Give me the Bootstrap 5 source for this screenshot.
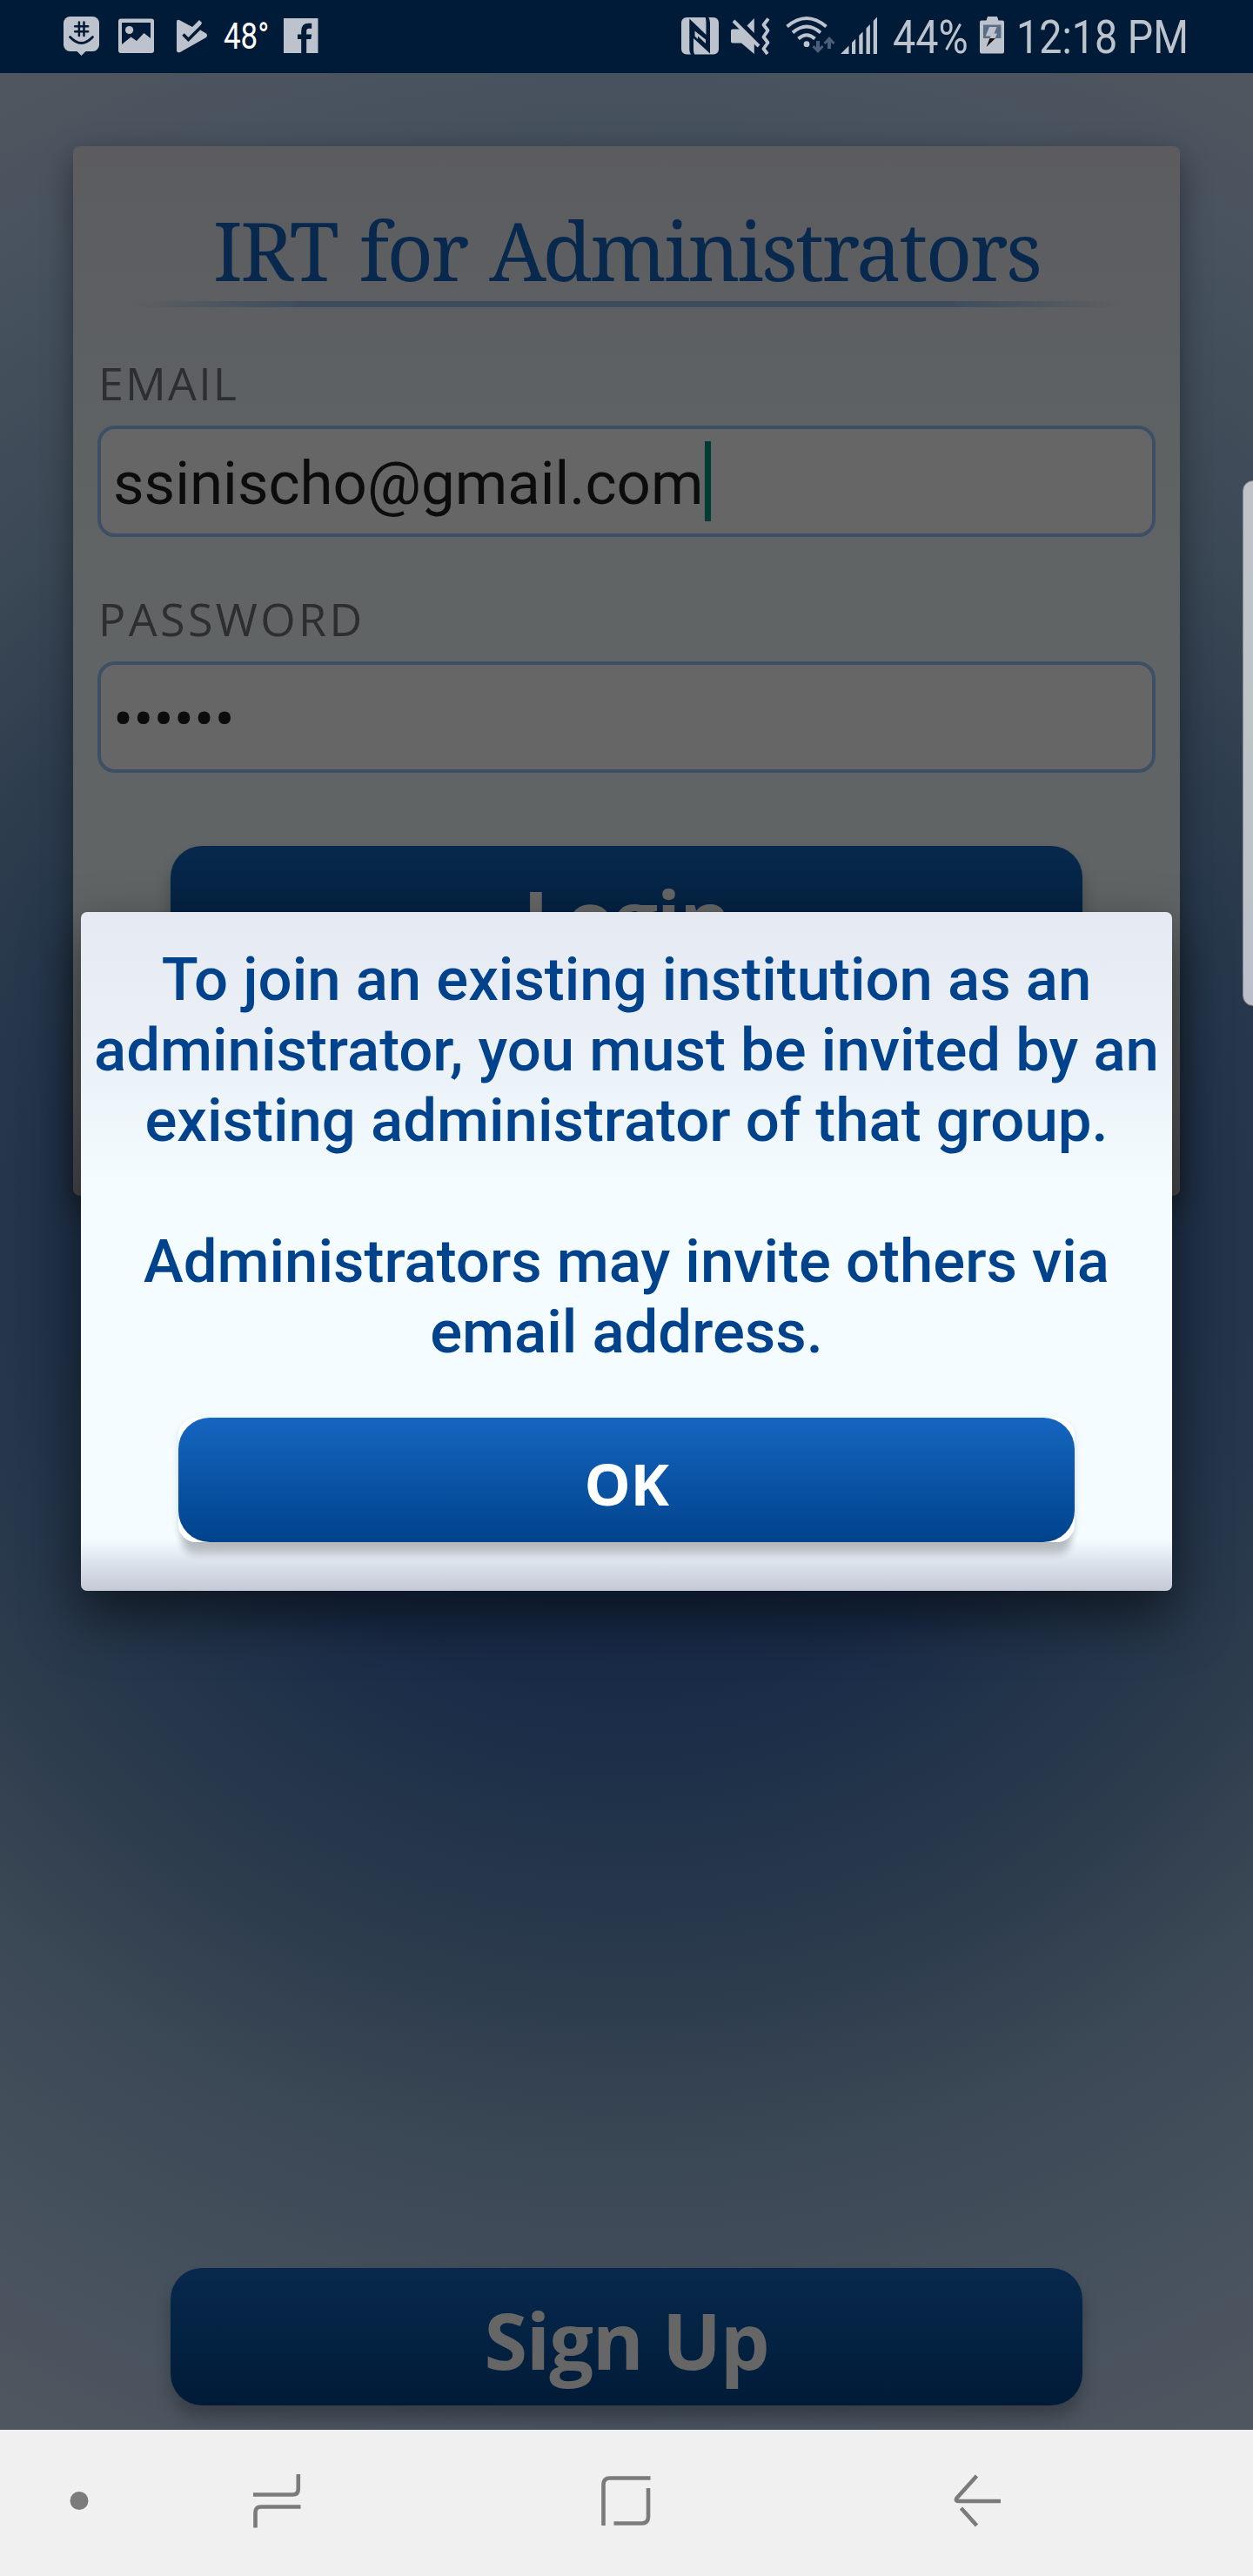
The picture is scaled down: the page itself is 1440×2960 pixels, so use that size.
<!DOCTYPE html>
<html lang="en">
<head>
<meta charset="utf-8">
<title>IRT for Administrators</title>
<meta name="viewport" content="width=device-width, initial-scale=1">
<link href="https://cdn.jsdelivr.net/npm/bootstrap@5.3.0/dist/css/bootstrap.min.css" rel="stylesheet">
<style>
  body { width: 1440px; height: 2960px; overflow: hidden; font-family: Roboto, sans-serif; }

  /* system status bar */
  .status-bar { height: 84px; background: #001b37; color: #bdc3cc; padding-left: 73px; }
  .status-bar svg { display: block; height: 54px; flex: none; }
  .status-text { display: block; flex: none; height: 84px; line-height: 84px; font-size: 53px; white-space: nowrap; }
  .status-text > span { display: inline-block; transform-origin: 0 50%; transform: scaleX(.88); }
  .temp-text { font-size: 42px; color: #fff; }
  .temp-text > span { transform: scaleX(.83); }

  /* dimmed login screen */
  .screen {
    height: 2708px; padding: 84px 84px 28px;
    background: radial-gradient(circle 1530px at 720px 1356px,
      #0e2442 0, #192b47 33%, #22344a 44%, #2d3c4d 56%, #3b4855 69%, #47525e 87%, #50565f 100%);
  }
  .login-card {
    height: 1206px; padding: 69px 28px 0; border: 0; border-radius: 8px;
    background: linear-gradient(#5c5c5f 0, #5d6062 18%, #606464 40%, #606464 80%, #5a5d5d 90%, #4a4a4e 100%);
    box-shadow: 0 12px 34px rgba(0,0,0,.4);
  }
  .app-title { font-family: "Noto Serif", serif; font-weight: 400; font-size: 93px; line-height: 100px; letter-spacing: -2.6px; word-spacing: 4px; color: #08284d; white-space: nowrap; }
  .title-rule { height: 7px; margin: 9px 30px 0; background: linear-gradient(90deg, rgba(61,76,93,0) 1%, #3d4c5d 18%, #3d4c5d 82%, rgba(61,76,93,0) 99%); }
  .field-label { display: block; font-family: "Open Sans", sans-serif; font-size: 52px; line-height: 60px; letter-spacing: 3.4px; color: #2d2e2f; padding-left: 1px; margin-bottom: 19px; }
  .label-tight { letter-spacing: 2.2px; }
  .field-box { height: 128px; border: 4px solid #3d4f66; border-radius: 20px; background: #666; color: #0c0c0c; font-size: 69px; line-height: 120px; padding: 0 14px; }
  .field-box > span { padding-top: 6px; }
  .caret { width: 7px; height: 92px; background: #003c34; margin-left: 2px; }
  .btn-app {
    display: block; width: 1048px; height: 158px; padding: 3px 0 0; border: 0; border-radius: 36px;
    font-family: "Open Sans", sans-serif; font-weight: 700; font-size: 90px; line-height: 158px;
  }
  .btn-dim { color: #666; letter-spacing: -1.2px; background: linear-gradient(#08294d, #001b37); box-shadow: 0 14px 18px rgba(0,0,0,.25); }

  /* notice dialog */
  .notice {
    left: 93px; top: 1048px; width: 1254px; height: 780px; padding: 37px 0 0; border-radius: 7px;
    background: linear-gradient(#e5e9f2 0, #e9edf4 12%, #ecf3f8 24%, #f4fcff 41%, #f4fcff 92.5%, #dbe1ea 96%, #c4c9d6 100%);
    box-shadow: 0 28px 60px 4px rgba(0,0,0,.5);
    z-index: 5;
  }
  .notice-text { font-size: 68.9px; font-weight: 500; line-height: 81px; color: #00438c; margin: 0 0 58px; }
  .ok-wrap { width: 1030px; height: 143px; border-radius: 20px; background: #fff; box-shadow: 0 18px 9px -4px rgba(0,0,0,.2), 0 3px 8px rgba(0,0,0,.1); }
  .btn-ok { width: 100%; height: 143px; line-height: 141px; padding-top: 5px; font-size: 67px; letter-spacing: -.5px; color: #fff; background: linear-gradient(#1565c0, #00438c); }

  .edge-handle { left: 1428px; top: 552px; width: 24px; height: 604px; border-radius: 12px 0 0 12px; border: 1px solid #85888f; background: linear-gradient(#bfc3c9, #bcc3c6 60%, #bbbfca); z-index: 6; }

  /* system navigation bar */
  .nav-keys { height: 168px; background: #f0f0f0; }
  .nav-keys svg { display: block; fill: none; stroke: #7b7b7b; stroke-width: 4.6; }
</style>
<script src="https://cdn.jsdelivr.net/npm/bootstrap@5.3.0/dist/js/bootstrap.bundle.min.js"></script>
</head>
<body class="position-relative d-flex flex-column m-0">

<header class="status-bar d-flex align-items-center">
  <svg width="41" viewBox="73 15 41 54"><rect x="73" y="19" width="41" height="40" rx="7.5" fill="#bdc3cc"/><path d="M88 58.5l5.5 5.5 5.5-5.5z" fill="#bdc3cc"/><path d="M90.9 25.5v15.5M96.5 25.5v15.5M86.2 30.3h15M86.2 36.2h15" stroke="#001b37" stroke-width="2.5" stroke-linecap="round"/><path d="M80.5 42.5Q93.5 56.5 106.5 42.5" fill="none" stroke="#001b37" stroke-width="2.8" stroke-linecap="round"/></svg>
  <svg width="41" viewBox="136 15 41 54" style="margin-left:22px"><rect x="136" y="21.5" width="41" height="39.5" rx="3" fill="#bdc3cc"/><path d="M140 26h33v18l-7.500-6-8.500 9-6.500-4.500L140 51z" fill="#001b37"/><circle cx="148.600" cy="34.500" r="4.600" fill="#bdc3cc"/></svg>
  <svg width="36" viewBox="203 15 36 54" style="margin-left:26px"><path d="M203 25q0-3 3-2l15 8 8-8 3 3-2.500 8 7.500 4.500q2 2 0 4.500L207 60q-4 1-4-2z" fill="#bdc3cc"/><path d="M210.500 39.500l6 6L234 28" fill="none" stroke="#001b37" stroke-width="3.600"/></svg>
  <span class="status-text temp-text" style="width:50px;margin-left:18px"><span>48°</span></span>
  <svg width="40" viewBox="325.500 15 40 54" style="margin-left:18.500px"><rect x="325.500" y="21" width="39.500" height="40" fill="#bdc3cc"/><path d="M345.700 61V45h-4.200v-5.500h4.200V36q0-9.300 8.300-9.300h3.700v6h-3.200q-2.800 0-2.800 2.800v4h6l-.8 5.500h-5.200v16z" fill="#001b37"/></svg>

  <svg width="43" viewBox="783 15 43 54" style="margin-left:417.500px"><rect x="783" y="20" width="43" height="42.500" rx="6" fill="#bdc3cc"/><path d="M792.300 21.500L811.500 40V26q0-4-1-6.500h3.500q2 2.500 2 6.500v35.500L797 44v12q0 5 1.500 7h-4q-2.200-2-2.200-7z" fill="#001b37"/><path d="M798.500 35.500l12.500 10v4.500l-9-8.500v3.500l-3.500-3.500z" fill="#bdc3cc"/></svg>
  <svg width="45" viewBox="840 15 45 54" style="margin-left:14px"><path d="M842 33.500h9l15.800 15V62L852 49.500H842q-2 0-2-2v-12q0-2 2-2zM858.500 29.500l8.300-8.500v17z" fill="#bdc3cc"/><path d="M843 24l29 29" stroke="#bdc3cc" stroke-width="4"/><path d="M883 21.500l-5.500 7 5 6.500-5 7.500 5 6.500-5 7 4.500 6" fill="none" stroke="#bdc3cc" stroke-width="3.800" stroke-linejoin="round"/></svg>
  <svg width="57" viewBox="903 15 57 54" style="margin-left:18px"><g fill="none" stroke="#bdc3cc" stroke-width="3.900"><path d="M904.500 30.500Q927 11.500 949.500 30.500"/><path d="M911 37.500Q927 23.500 943 37.500"/><path d="M917.500 44.500Q927 36 936.500 44.500"/></g><circle cx="927" cy="50.700" r="3.400" fill="#bdc3cc"/><path d="M938 47h4v7.500l2.500-2.500 2 2-6.500 7-6.500-7 2-2 2.500 2.500zM951 56h4v-7.500l2.500 2.500 2-2-6.500-7-6.500 7 2 2 2.500-2.500z" fill="#4d5f78"/></svg>
  <svg width="43" viewBox="966 15 43 54" style="margin-left:6px"><path d="M966 62h9.500v-9.500zM979 62h4.200V44.800l-4.200 4.200zM987.300 62h4.300V36.400l-4.300 4.300zM995.500 62h4.400V28.100l-4.400 4.400zM1003.700 62h4.300V19.500l-4.300 4.500z" fill="#bdc3cc"/></svg>
  <span class="status-text" style="width:84px;margin-left:16.500px;padding-top:1px"><span>44%</span></span>
  <svg width="28" viewBox="1125 15 28 54" style="margin-left:16px"><path d="M1127 23.500h5.500l1.500-4.500h11l1.500 4.500h4.500q2 0 2 2v34q0 2-2 2h-24q-2 0-2-2v-34q0-2 2-2z" fill="#bdc3cc"/><path d="M1129 28.500h20.500V44H1129z" fill="#5a6d84"/><path d="M1136 31h8.500l-3 7.500h3.500L1142.500 44h-6l1.200-2.500h-6z" fill="#bdc3cc"/><path d="M1136.500 44h6.500l-10.500 10z" fill="#111"/></svg>
  <span class="status-text" style="width:195px;margin-left:14.500px;padding-top:1px"><span>12:18 PM</span></span>
</header>

<main class="screen d-flex flex-column">
  <section class="card login-card">
    <h1 class="app-title text-center mb-0">IRT for Administrators</h1>
    <div class="title-rule"></div>
    <div style="margin-top:57px">
      <span class="field-label label-tight">EMAIL</span>
      <div class="field-box d-flex align-items-center"><span>ssinischo@gmail.com</span><i class="caret"></i></div>
    </div>
    <div style="margin-top:64px">
      <span class="field-label">PASSWORD</span>
      <div class="field-box d-flex align-items-center"><span>••••••</span></div>
    </div>
    <button type="button" class="btn btn-app btn-dim mx-auto" style="margin-top:84px">Login</button>
  </section>
  <button type="button" class="btn btn-app btn-dim mx-auto mt-auto">Sign Up</button>
</main>

<footer class="nav-keys">
  <svg width="1440" height="168" viewBox="0 2792 1440 168">
    <circle cx="91" cy="2873.500" r="10.500" fill="#7b7b7b" stroke="none"/>
    <path d="M342.800 2843v17q0 6.500-6.500 6.500H291M345.500 2880.500H300q-6.500 0-6.500 6.500v17.500"/>
    <path d="M747.500 2847.500H701q-7.500 0-7.500 7.500v47M745 2859v33q0 7.500-7.500 7.500H705.500"/>
    <path d="M1150 2874H1102q-5 0-2-4l22.500-25M1104.500 2882l18 20"/>
  </svg>
</footer>

<div class="notice position-absolute text-center" role="dialog">
  <p class="notice-text">To join an existing institution as an<br>administrator, you must be invited by an<br>existing administrator of that group.<br><br>Administrators may invite others via<br>email address.</p>
  <div class="ok-wrap mx-auto"><button type="button" class="btn btn-app btn-ok">OK</button></div>
</div>
<div class="edge-handle position-absolute"></div>
</body>
</html>
